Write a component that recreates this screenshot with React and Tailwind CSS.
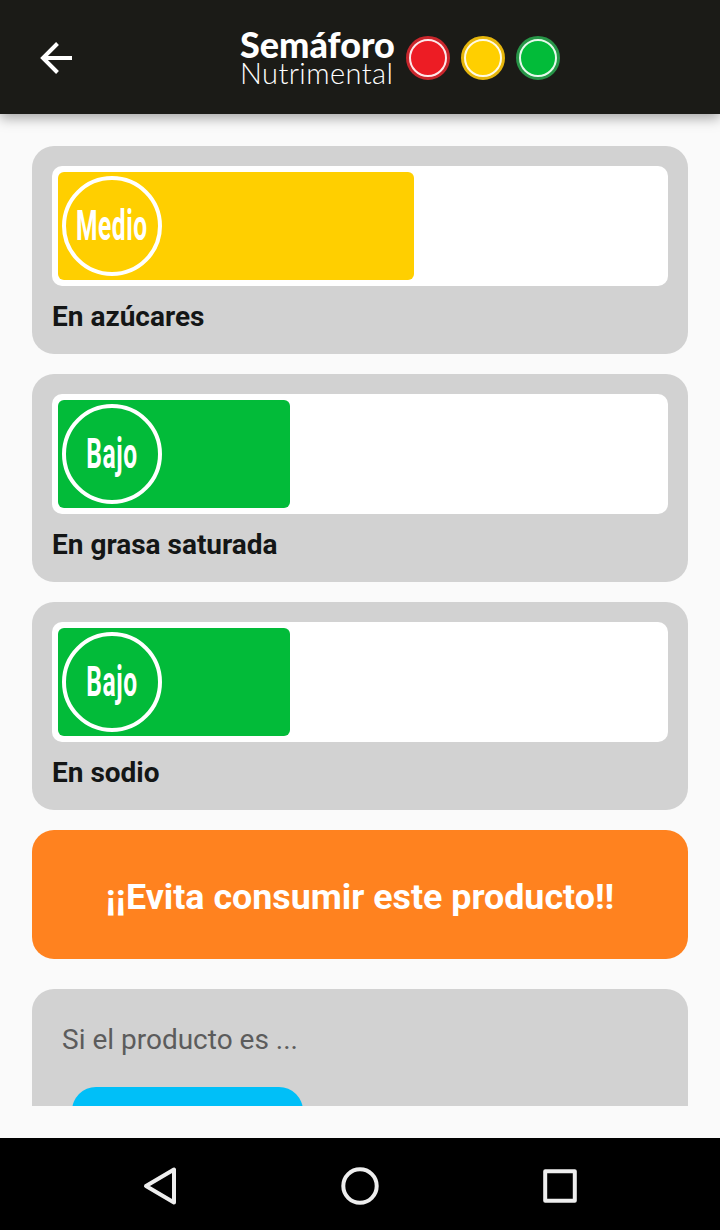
import React from "react";

const levels = [
  { label: "En azúcares", level: "Medio", width: 356 },
  { label: "En grasa saturada", level: "Bajo", width: 232 },
  { label: "En sodio", level: "Bajo", width: 232 },
];

const levelStyle = (level) => {
  switch (level) {
    case "Alto":
      return "bg-[#ed1c24]";
    case "Medio":
      return "bg-[#ffcf00]";
    default:
      return "bg-[#02bb39]";
  }
};

const lights = [
  "bg-[#ed1c24] border-[#c9262c]",
  "bg-[#ffcf00] border-[#e6b60c]",
  "bg-[#02bb39] border-[#279547]",
];

const Header = () => {
  return (
    <header className="relative z-10 flex h-[114px] shrink-0 items-center bg-[#1b1b17] pt-0.5 pl-10 shadow-[0_4px_12px_rgba(0,0,0,0.35)]">
      <button className="h-8 w-8" aria-label="Atrás">
        <svg viewBox="0 0 32 32" className="block h-8 w-8" fill="none">
          <path
            d="M32 16H3M17.5 1.5L3 16L17.5 30.5"
            stroke="#fff"
            strokeWidth="4"
          />
        </svg>
      </button>

      <div className="ml-[168px] flex items-center">
        <div className="w-[166px] font-['Lato',sans-serif] whitespace-nowrap text-white">
          <div className="h-[30px] text-[36px] leading-[30px] font-black">
            Semáforo
          </div>
          <div className="h-[28px] text-[29px] leading-[28px] font-light tracking-[0.4px]">
            Nutrimental
          </div>
        </div>

        <div className="flex gap-[11px]">
          {lights.map((c) => (
            <div key={c} className={`h-11 w-11 rounded-full border-3 ${c}`}>
              <div className="h-full w-full rounded-full border-2 border-white/90" />
            </div>
          ))}
        </div>
      </div>
    </header>
  );
};

const LevelCard = ({ item }) => {
  return (
    <div className="h-[208px] shrink-0 rounded-[22px] bg-[#d2d2d2] p-5">
      <div className="h-[120px] rounded-[10px] bg-white p-1.5">
        <div
          className={`flex h-[108px] items-center rounded-md pl-1 ${levelStyle(
            item.level
          )}`}
          style={{ width: item.width }}
        >
          <div className="flex h-[100px] w-[100px] items-center justify-center rounded-full border-4 border-white pb-0.5">
            <span className="scale-x-[0.57] text-[43px] leading-none font-bold tracking-[1px] text-white">
              {item.level}
            </span>
          </div>
        </div>
      </div>
      <p className="mt-3 text-[28px] leading-[38px] font-bold text-[#141616]">
        {item.label}
      </p>
    </div>
  );
};

const NavBar = () => {
  return (
    <nav className="flex h-[92px] shrink-0 items-center justify-center gap-40 bg-black pt-1">
      <svg viewBox="0 0 40 40" className="h-10 w-10" fill="none">
        <path
          d="M34 3.5V36.5L6 20Z"
          stroke="#eee"
          strokeWidth="4"
          strokeLinejoin="round"
        />
      </svg>
      <svg viewBox="0 0 40 40" className="h-10 w-10" fill="none">
        <circle cx="20" cy="20" r="16.7" stroke="#eee" strokeWidth="4" />
      </svg>
      <svg viewBox="0 0 40 40" className="h-10 w-10" fill="none">
        <rect
          x="5.2"
          y="5.2"
          width="29.6"
          height="29.6"
          stroke="#eee"
          strokeWidth="4"
          strokeLinejoin="round"
        />
      </svg>
    </nav>
  );
};

const App = () => {
  return (
    <div className="flex h-[1230px] w-[720px] flex-col overflow-hidden bg-[#fafafa] font-['Roboto',sans-serif]">
      <Header />

      <main className="mx-8 mt-8 mb-8 flex min-h-0 flex-1 flex-col overflow-hidden">
        <div className="flex flex-col gap-5">
          {levels.map((item) => (
            <LevelCard key={item.label} item={item} />
          ))}

          <div className="flex h-[129px] shrink-0 items-center justify-center rounded-[22px] bg-[#ff821f] pt-1.5 text-[35.8px] font-bold text-white">
            ¡¡Evita consumir este producto!!
          </div>
        </div>

        <div className="mt-[30px] h-[300px] shrink-0 rounded-[22px] bg-[#d2d2d2] px-[30px] pt-[31px]">
          <p className="text-[28px] leading-[40px] text-[#5c5c5c]">
            Si el producto es ...
          </p>
          <div className="mt-[27px] ml-2.5 h-20 w-[231px] rounded-[24px] bg-[#00bff8]" />
        </div>
      </main>

      <NavBar />
    </div>
  );
};

export default App;
